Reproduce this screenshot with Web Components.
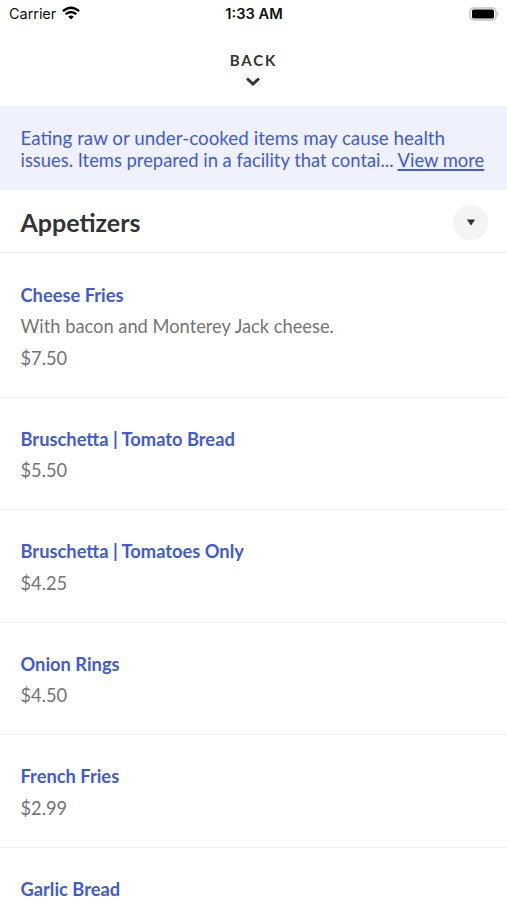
<!DOCTYPE html>
<html lang="en"><head><meta charset="utf-8"><title>Menu</title>
<style>html,body{margin:0;background:#fff}body{height:900px;overflow:hidden;font-family:Lato,sans-serif}</style></head>
<body><menu-screen></menu-screen>
<script>
const define=(name,html)=>customElements.define(name,class extends HTMLElement{
  constructor(){super();this.attachShadow({mode:'open'}).innerHTML=html;}
});
define('status-bar',`<style>
:host{display:grid;grid-template-columns:1fr auto 1fr;align-items:center;height:28px;padding:0 8px 1px 9px;box-sizing:border-box;font:14.5px Inter,sans-serif;color:#111}
.left{display:flex;align-items:center;gap:6px;letter-spacing:-.05px}.time{font-weight:600;font-size:14.700px}.battery{justify-self:end}svg{display:block}
.left svg{margin-top:-1px}
</style><div class="left"><span>Carrier</span><svg width="18" height="14" viewBox="0 0 18 14"><g fill="none" stroke="#000" stroke-width="2.400"><path d="M.9 5.200Q9-1.700 17.100 5.200"/><path d="M3.700 8.200Q9 3.700 14.300 8.200"/></g><path d="M6.200 10.700Q9 8.300 11.800 10.700L9 13.500Z"/></svg></div>
<span class="time">1:33 AM</span>
<svg class="battery" width="30" height="14" viewBox="0 0 30 14"><rect x="1" y="1" width="26" height="12" rx="3.500" fill="none" stroke="#c4c4c4" stroke-width="1.500"/><rect x="3" y="2.500" width="22" height="9" rx="1.500"/><path d="M28.300 5Q30.500 7 28.300 9Z" fill="#b5b5b5"/></svg>`);
define('back-button',`<style>
:host{display:flex;flex-direction:column;align-items:center;height:78px;padding:23px 1px 0 0;box-sizing:border-box;color:#333}
span{font-size:15px;line-height:18px;font-weight:700;letter-spacing:1.85px;margin-right:-1px}svg{display:block;margin-top:7px}
</style><span><slot></slot></span><svg width="16" height="11" viewBox="0 0 16 11"><path d="M2 2.500L8 8L14 2.500" fill="none" stroke="#333" stroke-width="2.900"/></svg>`);
define('allergy-notice',`<style>
:host{display:block;height:84px;padding:21px 20.5px 0;box-sizing:border-box;background:#f0f1ff;color:#3f5bd6;font-size:18.380px;line-height:22px;white-space:nowrap}
.first{font-size:18.820px}
u{text-decoration-thickness:1.500px;text-underline-offset:2px}
</style><div class="first">Eating raw or under-cooked items may cause health</div><div>issues. Items prepared in a facility that contai... <u>View more</u></div>`);
define('section-header',`<style>
:host{display:flex;justify-content:space-between;align-items:center;height:63.4px;padding:2px 19px 0 20.5px;box-sizing:border-box;border-bottom:1px solid #efefef;color:#333}
h1{margin:0;font-size:25px;line-height:30px}i{display:grid;place-items:center;width:35px;height:35px;border-radius:50%;background:#f4f4f4}
</style><h1><slot></slot></h1><i><svg width="10" height="7" viewBox="0 0 10 7"><path d="M.8.5H9.200L5 6.500Z" fill="#333"/></svg></i>`);
define('menu-item',`<style>
:host{display:block;padding:26.2px 20.5px 21.9px;border-bottom:1px solid #f0f0f0;font-size:18.300px;line-height:31.700px;color:#757575}
:host(:last-child){padding-bottom:0;border:0}
b{display:block;color:#3f5bd6}slot{display:block}
</style><b><slot name="title"></slot></b><slot></slot>`);
const items=[['Cheese Fries','$7.50','With bacon and Monterey Jack cheese.'],['Bruschetta | Tomato Bread','$5.50'],['Bruschetta | Tomatoes Only','$4.25'],['Onion Rings','$4.50'],['French Fries','$2.99'],['Garlic Bread']];
define('menu-screen',`<style>:host{display:block;height:900px;overflow:hidden}</style><status-bar></status-bar><back-button>BACK</back-button><allergy-notice></allergy-notice><section-header>Appetizers</section-header>${items.map(([t,p,d])=>`<menu-item><span slot="title">${t}</span>${d?`<div>${d}</div>`:''}${p?`<div>${p}</div>`:''}</menu-item>`).join('')}`);
</script></body></html>
